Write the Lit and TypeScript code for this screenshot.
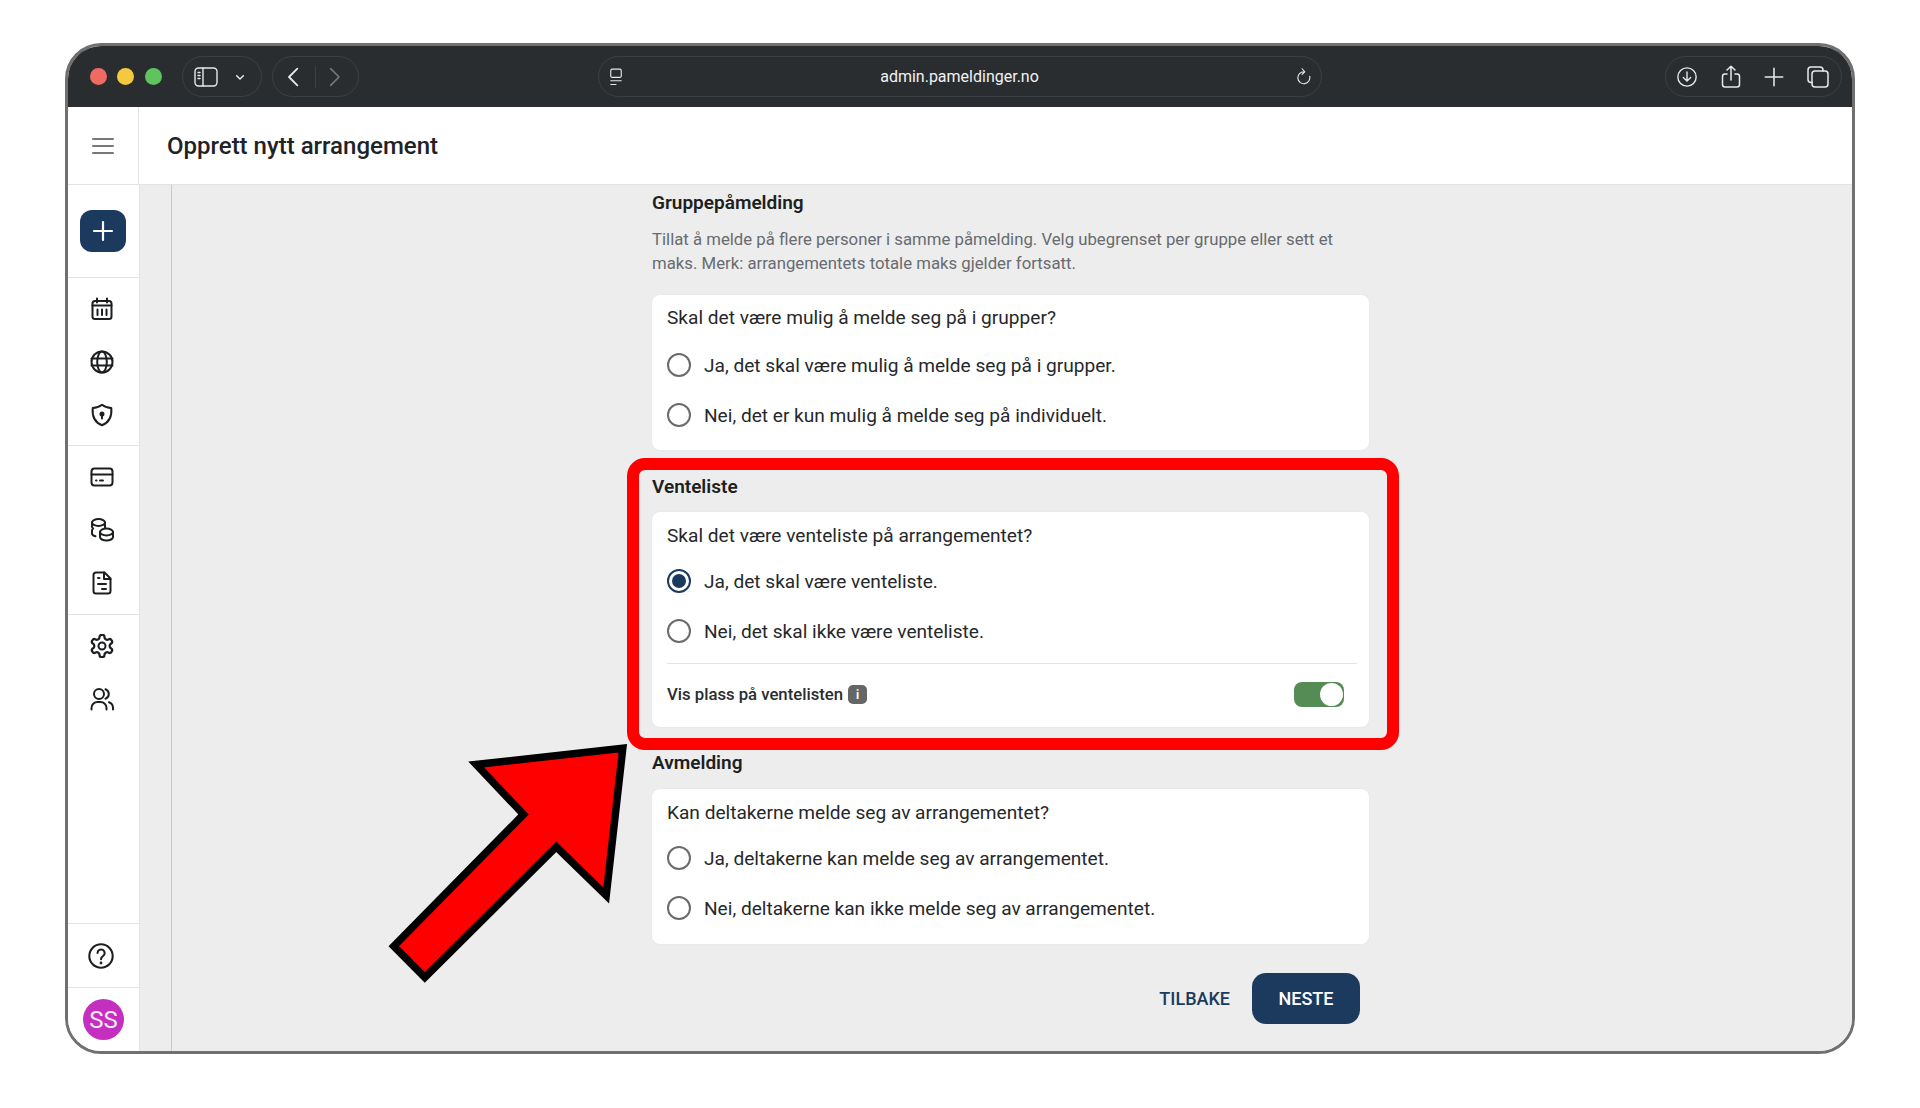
import { LitElement, html, css, svg } from "lit";
import { customElement } from "lit/decorators.js";

const ic = (body: unknown, size = 24, sw = 2) => html`<svg width=${size} height=${size} viewBox="0 0 24 24" fill="none" stroke="currentColor" stroke-width=${sw} stroke-linecap="round" stroke-linejoin="round">${body}</svg>`;

const icons = {
  calendar: svg`<rect x="2.5" y="4" width="19" height="18" rx="2.5"/><path d="M2.5 8.5h19M7 1.5v4M17 1.5v4M7.5 12.5v5.5M12 12.5v5.5M16.5 12.5v5.5"/>`,
  globe: svg`<circle cx="12" cy="12" r="10.5"/><path d="M1.5 8.5h21M1.5 15.5h21"/><ellipse cx="12" cy="12" rx="4.8" ry="10.5"/>`,
  shield: svg`<path d="M12 1.8c2.8 2.2 5.7 3.2 9.3 3.2.8 8.7-2.4 14.5-9.3 17.2C5.100 19.500 1.900 13.700 2.700 5 6.300 5 9.200 4 12 1.800z"/><circle cx="12" cy="11" r="1.500" fill="currentColor"/><path d="M12 12v3.500"/>`,
  card: svg`<rect x="1.500" y="3.500" width="21" height="17" rx="3"/><path d="M1.500 9.500h21M6 15.500h.5M10 15.500h3"/>`,
  coins: svg`<ellipse cx="8.500" cy="4.500" rx="6.500" ry="3.500"/><path d="M15 4.500v5M2 4.500v4c0 1 .5 1.500 1.200 2-.7.500-1.200 1-1.200 2v3c0 1.300 1.500 2.300 3.500 2.800"/><ellipse cx="16.500" cy="14" rx="6.500" ry="3.500"/><path d="M10 14v5c0 2 3 3.500 6.500 3.500S23 21 23 19v-5"/>`,
  doc: svg`<path d="M6 1.500h8.500l6 6V20a2.500 2.500 0 0 1-2.500 2.500H6A2.500 2.500 0 0 1 3.500 20V4A2.500 2.500 0 0 1 6 1.500z"/><path d="M14 1.500V8h6.500M8 7h1.500M8 13h8M12 18h4"/>`,
  gear: svg`<path d="M12.220 2h-.44a2 2 0 0 0-2 2v.18a2 2 0 0 1-1 1.730l-.43.25a2 2 0 0 1-2 0l-.15-.08a2 2 0 0 0-2.730.73l-.22.38a2 2 0 0 0 .73 2.730l.15.1a2 2 0 0 1 1 1.720v.51a2 2 0 0 1-1 1.740l-.15.09a2 2 0 0 0-.73 2.730l.22.38a2 2 0 0 0 2.730.73l.15-.08a2 2 0 0 1 2 0l.43.25a2 2 0 0 1 1 1.730V20a2 2 0 0 0 2 2h.44a2 2 0 0 0 2-2v-.18a2 2 0 0 1 1-1.730l.43-.25a2 2 0 0 1 2 0l.15.08a2 2 0 0 0 2.730-.73l.22-.39a2 2 0 0 0-.73-2.730l-.15-.08a2 2 0 0 1-1-1.740v-.5a2 2 0 0 1 1-1.740l.15-.09a2 2 0 0 0 .73-2.730l-.22-.38a2 2 0 0 0-2.730-.73l-.15.08a2 2 0 0 1-2 0l-.43-.25a2 2 0 0 1-1-1.730V4a2 2 0 0 0-2-2z" transform="translate(12 12) scale(1.120) translate(-12 -12)"/><circle cx="12" cy="12" r="3.500"/>`,
  users: svg`<circle cx="9" cy="7" r="5"/><path d="M1.500 22.500v-1.500a6 6 0 0 1 6-6h3a6 6 0 0 1 6 6v1.500M15.500 2.300a5 5 0 0 1 0 9.400M19 15.200a6 6 0 0 1 4 5.800v1.500"/>`,
  help: svg`<circle cx="12" cy="12" r="10.800"/><path d="M8.800 9.300a3.300 3.300 0 1 1 5 2.800c-1.200.8-1.800 1.400-1.800 2.900"/><path d="M12 18.400v.1" stroke-width="2.600"/>`,
};

const groups = [
  ["calendar", "globe", "shield"],
  ["card", "coins", "doc"],
  ["gear", "users"],
] as (keyof typeof icons)[][];

@customElement("app-root")
export class AppRoot extends LitElement {
  static styles = css`
    :host { display: block; height: 1108px; background: #fff; font-family: Roboto, "Liberation Sans", sans-serif; color: #1f2124; padding: 43px 65px 0; box-sizing: border-box; }
    .win { position: relative; width: 1790px; height: 1011px; box-sizing: border-box; border: 3.5px solid #707070; border-radius: 36px; overflow: hidden; display: flex; flex-direction: column; background: #fff; }
    .bar { height: 61px; flex: none; background: #2a2d30; display: flex; align-items: center; color: #e8e8e8; padding: 0 10px 0 0; }
    .dots { display: flex; gap: 10.5px; margin-left: 21.500px; width: 92px; }
    .dot { width: 17px; height: 17px; border-radius: 50%; }
    .red { background: #ee6a63; } .yel { background: #f5c93f; } .grn { background: #5fc45e; }
    .pill { height: 41px; box-sizing: border-box; border: 1px solid #3c3f44; border-radius: 21px; display: flex; align-items: center; }
    .p1 { width: 80px; padding-left: 11px; gap: 14px; }
    .p2 { width: 87px; margin-left: 10px; }
    .p2 svg { flex: none; }
    .p2 .back { width: 43px; display: flex; justify-content: flex-end; padding-right: 11px; box-sizing: border-box; border-right: 1px solid #3c3f44; height: 22px; align-items: center; }
    .p2 .fwd { padding-left: 8px; display: flex; color: #74777b; }
    .url { width: 724px; margin-left: 239px; justify-content: space-between; padding: 0 8px 0 8px; position: relative; }
    .url span { position: absolute; left: 0; right: 0; text-align: center; font-size: 16px; font-weight: 400; color: #f2f2f2; }
    .p4 { margin-left: auto; width: 177px; justify-content: space-between; padding: 0 11px 0 10px; box-sizing: border-box; }
    .head { height: 78px; flex: none; box-sizing: border-box; border-bottom: 1px solid #e3e3e3; display: flex; align-items: center; background: #fff; }
    .menu { width: 71px; height: 100%; box-sizing: border-box; border-right: 1px solid #e3e3e3; display: flex; align-items: center; justify-content: center; color: #777; margin-right: 28px; flex: none; }
    h1 { margin: 0; font-size: 24px; font-weight: 500; color: #202226; }
    .body { flex: 1; min-height: 0; display: flex; }
    .side { width: 72px; flex: none; box-sizing: border-box; border-right: 1px solid #e3e3e3; display: flex; flex-direction: column; background: #fff; }
    .grp { box-sizing: border-box; border-bottom: 1px solid #e3e3e3; padding: 4px 0; }
    .g0 { height: 93px; display: flex; align-items: center; justify-content: center; padding: 0 2px 0 0; }
    .g1 { height: 168px; }
    .g2 { height: 169px; flex: none; }
    .g3 { flex: 1; }
    .item { height: 53px; display: flex; align-items: center; justify-content: center; color: #1c1e20; padding-right: 3px; box-sizing: border-box; }
    .plus { width: 46px; height: 42px; border-radius: 12px; background: #1c3a5e; color: #fff; display: flex; align-items: center; justify-content: center; }
    .help { height: 64px; padding: 0; }
    .item.help { padding-right: 6px; }
    .avw { height: 63px; display: flex; align-items: center; justify-content: center; }
    .av { width: 41px; height: 41px; border-radius: 50%; background: #c52fc0; color: #f8e8f8; display: flex; align-items: center; justify-content: center; font-size: 24px; }
    .rail { width: 32px; flex: none; box-sizing: border-box; border-right: 1.500px solid #c9c9c9; background: #ededed; }
    .main { flex: 1; background: #ededed; padding: 6px 0 0 480px; min-width: 0; }
    .col { width: 717px; }
    h2 { margin: 0; font-size: 19px; line-height: 24px; font-weight: 600; color: #1d1f21; }
    .desc { margin: 11.500px 0 20.500px; font-size: 16.750px; line-height: 24px; color: #686b6f; width: 700px; }
    .card { background: #fff; border-radius: 8px; padding: 11px 12px 10px 15px; box-shadow: 0 0 2px rgba(0,0,0,.06); }
    .q { font-size: 19.100px; line-height: 24px; color: #26282b; margin-bottom: 10px; }
    .opt { height: 50px; display: flex; align-items: center; gap: 13px; font-size: 19.100px; color: #26282b; }
    .r { width: 24px; height: 24px; box-sizing: border-box; border: 2.500px solid #6b6b6b; border-radius: 50%; flex: none; display: flex; align-items: center; justify-content: center; }
    .r.on { border-color: #1c3a5e; }
    .r.on i { width: 14px; height: 14px; border-radius: 50%; background: #1c3a5e; }
    .s2 { margin-top: 25px; }
    .s2 h2 { margin-bottom: 13px; }
    .s3 { margin-top: 24px; }
    .s3 h2 { margin-bottom: 14px; }
    .s2 .card { padding: 12px 12px 0 15px; }
    .s2 .q, .s3 .q { margin-bottom: 8px; }
    .s3 .card { padding-top: 12px; padding-bottom: 11px; }
    .sw { margin-top: 7px; border-top: 1px solid #e3e3e3; height: 64px; padding-bottom: 2px; box-sizing: border-box; display: flex; align-items: center; font-size: 16.700px; font-weight: 500; color: #2a2c2f; gap: 5px; }
    .i { width: 19px; height: 19px; background: #666; border-radius: 5px; color: #fff; font-size: 12px; font-weight: 700; display: flex; align-items: center; justify-content: center; }
    .tg { margin-left: auto; margin-right: 13px; width: 50px; height: 25px; box-sizing: border-box; border-radius: 8px; background: #558b54; display: flex; justify-content: flex-end; padding: 1px; }
    .tg i { width: 23px; height: 23px; border-radius: 50%; background: #fff; }
    .acts { display: flex; justify-content: flex-end; align-items: center; gap: 22px; margin-top: 29px; padding-right: 9px; }
    .back-btn { font-size: 18px; font-weight: 500; color: #1c3a5e; }
    .next { width: 108px; height: 51px; border-radius: 14px; background: #1c3a5e; color: #fff; font-size: 18px; font-weight: 500; display: flex; align-items: center; justify-content: center; }
    .box { position: absolute; left: 559px; top: 412px; width: 772px; height: 292px; box-sizing: border-box; border: 12px solid #f00; border-radius: 18px; }
    .arrow { position: absolute; left: 300px; top: 680px; }
  `;

  private opt(t: string, on = false) {
    return html`<div class="opt"><span class="r ${on ? "on" : ""}">${on ? html`<i></i>` : ""}</span>${t}</div>`;
  }

  render() {
    return html`<div class="win">
      <div class="bar">
        <div class="dots"><span class="dot red"></span><span class="dot yel"></span><span class="dot grn"></span></div>
        <div class="pill p1">
          ${ic(svg`<rect x="1" y="3" width="22" height="18" rx="3.500"/><path d="M9 3v18M4 7.500h2M4 10.500h2M4 13.500h2"/>`, 24, 1.400)}
          ${ic(svg`<path d="M7 10l5 5 5-5"/>`, 16, 2.200)}
        </div>
        <div class="pill p2">
          <span class="back">${ic(svg`<path d="M16 2 6 12l10 10"/>`, 20, 2.200)}</span>
          <span class="fwd">${ic(svg`<path d="M8 2l10 10L8 22"/>`, 20, 2)}</span>
        </div>
        <div class="pill url">
          ${ic(svg`<rect x="5" y="1.500" width="14" height="11" rx="2"/><path d="M5 17h14M5 22h7"/>`, 18, 1.500)}
          <span>admin.pameldinger.no</span>
          ${ic(svg`<path d="M19.500 11a8 8 0 1 1-7.500-6M9.500 1l3.500 4-3.500 3.500"/>`, 18, 1.500)}
        </div>
        <div class="pill p4">
          ${ic(svg`<circle cx="12" cy="12" r="10"/><path d="M12 6.500v10M8 12.500l4 4 4-4"/>`, 22, 1.500)}
          ${ic(svg`<path d="M8 9H6a2.500 2.500 0 0 0-2.500 2.500v8A2.500 2.500 0 0 0 6 22h12a2.500 2.500 0 0 0 2.500-2.500v-8A2.500 2.500 0 0 0 18 9h-2M12 15V1.500M8 5l4-3.800L16 5"/>`, 24, 1.500)}
          ${ic(svg`<path d="M12 2.500v19M2.500 12h19"/>`, 22, 1.700)}
          ${ic(svg`<path d="M6 17.500H5A3 3 0 0 1 2 14.500V5a3 3 0 0 1 3-3h9a3 3 0 0 1 3 3v1"/><rect x="6" y="6" width="16" height="16" rx="3"/>`, 24, 1.500)}
        </div>
      </div>
      <div class="head">
        <div class="menu">${ic(svg`<path d="M2 5h20M2 12h20M2 19h20"/>`, 24, 2)}</div>
        <h1>Opprett nytt arrangement</h1>
      </div>
      <div class="body">
        <nav class="side">
          <div class="grp g0"><div class="plus">${ic(svg`<path d="M12 3v18M3 12h18"/>`, 24, 2.200)}</div></div>
          ${groups.map((g, i) => html`<div class="grp g${i + 1}">${g.map((n) => html`<div class="item">${ic(icons[n], 24, 2)}</div>`)}</div>`)}
          <div class="grp help"><div class="item help">${ic(icons.help, 26, 1.900)}</div></div>
          <div class="avw"><div class="av">SS</div></div>
        </nav>
        <div class="rail"></div>
        <main class="main">
          <div class="col">
            <h2>Gruppepåmelding</h2>
            <p class="desc">Tillat å melde på flere personer i samme påmelding. Velg ubegrenset per gruppe eller sett et maks. Merk: arrangementets totale maks gjelder fortsatt.</p>
            <div class="card">
              <div class="q">Skal det være mulig å melde seg på i grupper?</div>
              ${this.opt("Ja, det skal være mulig å melde seg på i grupper.")}
              ${this.opt("Nei, det er kun mulig å melde seg på individuelt.")}
            </div>
            <section class="s2">
              <h2>Venteliste</h2>
              <div class="card">
                <div class="q">Skal det være venteliste på arrangementet?</div>
                ${this.opt("Ja, det skal være venteliste.", true)}
                ${this.opt("Nei, det skal ikke være venteliste.")}
                <div class="sw">Vis plass på ventelisten <span class="i">i</span><span class="tg"><i></i></span></div>
              </div>
            </section>
            <section class="s3">
              <h2>Avmelding</h2>
              <div class="card">
                <div class="q">Kan deltakerne melde seg av arrangementet?</div>
                ${this.opt("Ja, deltakerne kan melde seg av arrangementet.")}
                ${this.opt("Nei, deltakerne kan ikke melde seg av arrangementet.")}
              </div>
            </section>
            <div class="acts"><span class="back-btn">TILBAKE</span><span class="next">NESTE</span></div>
          </div>
        </main>
      </div>
      <div class="box"></div>
      <svg class="arrow" width="270" height="270" viewBox="0 0 270 270">
        <polygon points="254.800,22.200 108.200,38.500 155.500,88.500 25.800,220.200 56.800,251.500 188.200,120.800 238.200,169.500" fill="#f00" stroke="#000" stroke-width="7.500" stroke-linejoin="miter"/>
      </svg>
    </div>`;
  }
}
